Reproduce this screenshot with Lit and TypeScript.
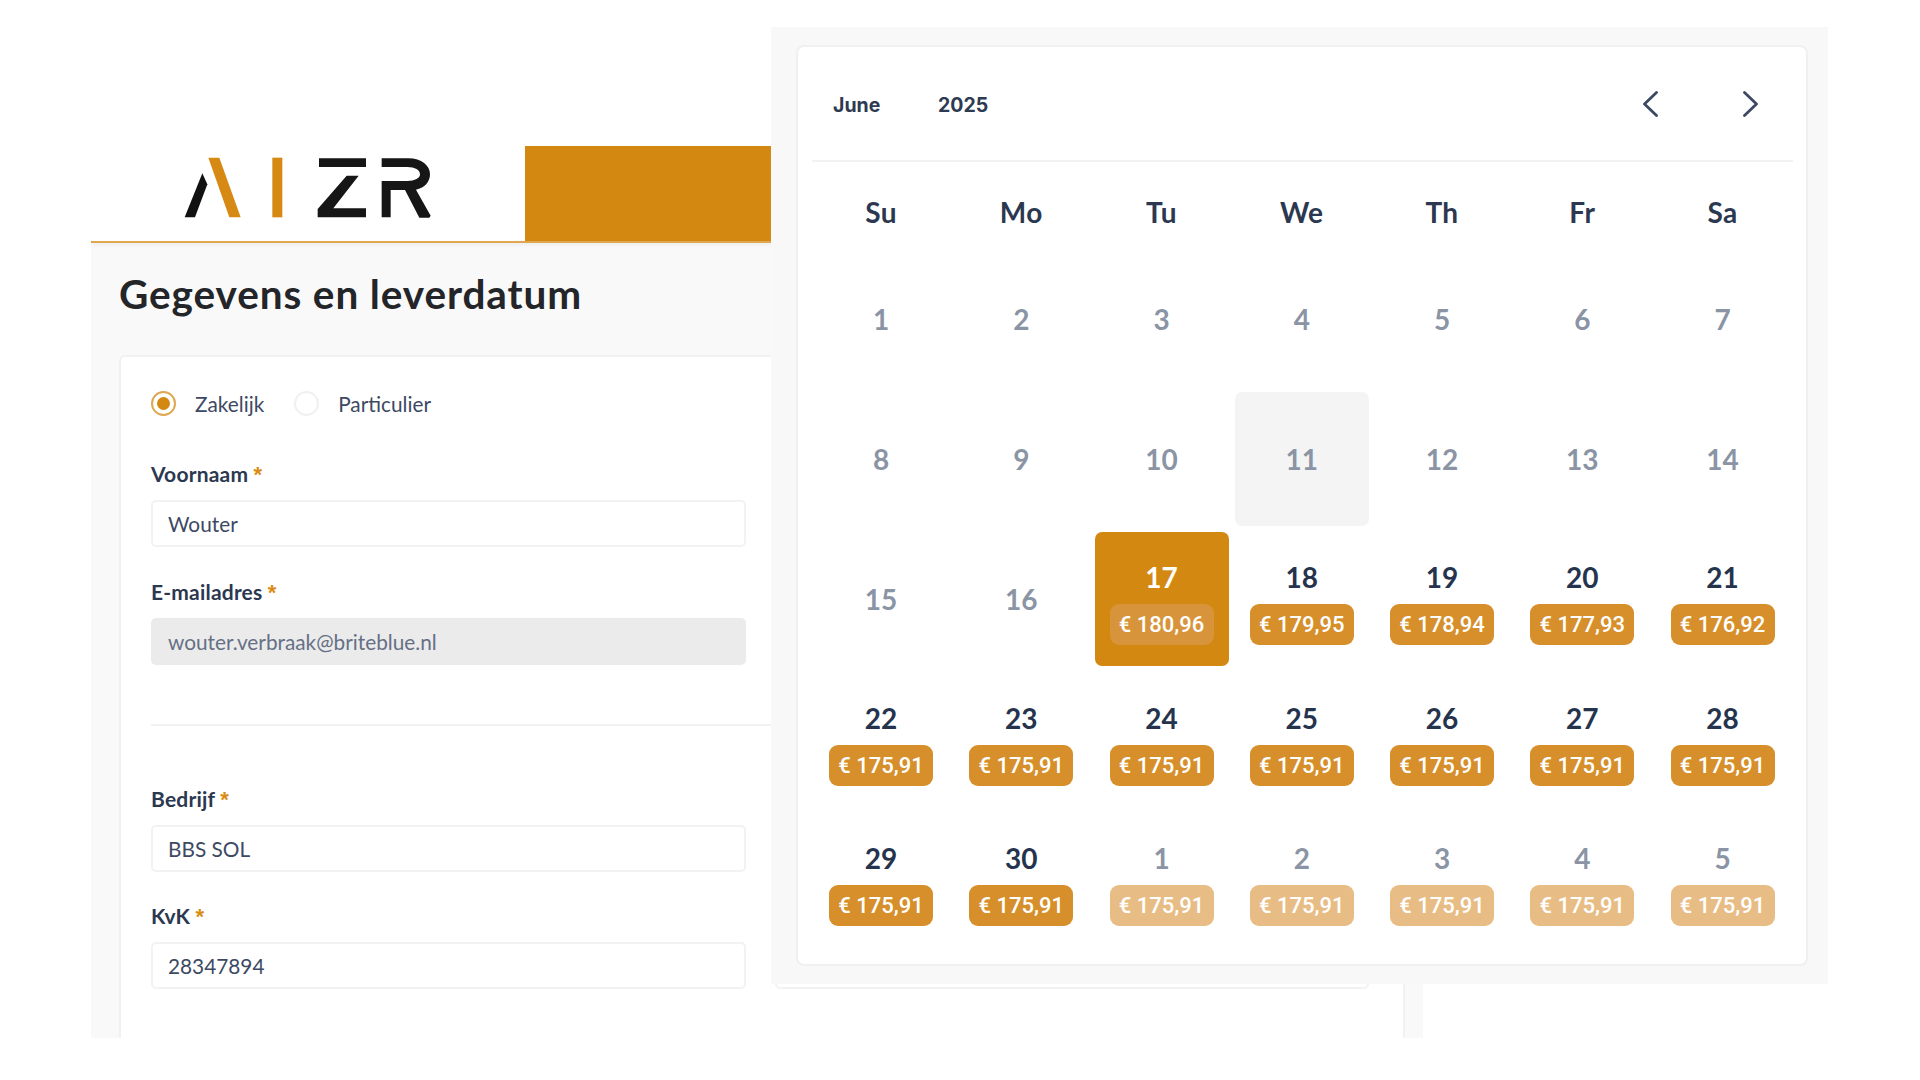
import {html, css, LitElement, svg} from 'lit';
import {customElement} from 'lit/decorators.js';
import {classMap} from 'lit/directives/class-map.js';

interface Day {
  label: string;
  price?: string;
  muted?: boolean;
  today?: boolean;
  selected?: boolean;
  faded?: boolean;
}

const WEEKDAYS = ['Su', 'Mo', 'Tu', 'We', 'Th', 'Fr', 'Sa'];

function buildDays(): Day[] {
  const days: Day[] = [];
  for (let d = 1; d <= 16; d++) {
    days.push({label: String(d), muted: true, today: d === 11});
  }
  days.push({label: '17', price: '€ 180,96', selected: true});
  days.push({label: '18', price: '€ 179,95'});
  days.push({label: '19', price: '€ 178,94'});
  days.push({label: '20', price: '€ 177,93'});
  days.push({label: '21', price: '€ 176,92'});
  for (let d = 22; d <= 30; d++) {
    days.push({label: String(d), price: '€ 175,91'});
  }
  for (let d = 1; d <= 5; d++) {
    days.push({label: String(d), price: '€ 175,91', muted: true, faded: true});
  }
  return days;
}

@customElement('app-root')
export class AppRoot extends LitElement {
  static styles = css`
    :host {
      display: block;
      position: relative;
      width: 1920px;
      height: 1080px;
      overflow: hidden;
      background: #fff;
      font-family: Lato, "Noto Sans", sans-serif;
      color: #2b3850;
    }

    /* back window */
    .window {
      position: absolute;
      left: 91px;
      top: 146px;
      width: 1332px;
      height: 892px;
      overflow: hidden;
      background: #f9f9f9;
      box-sizing: border-box;
    }

    .topbar {
      display: flex;
      justify-content: space-between;
      height: 97px;
      box-sizing: border-box;
      background: #fff;
      border-bottom: 2px solid #e0a650;
      box-shadow: 0 2px 4px rgba(0, 0, 0, 0.05);
    }

    .logo {
      width: 434px;
      height: 95px;
      flex: none;
    }

    .topbar-fill {
      width: 898px;
      background: #d38812;
    }

    h1 {
      margin: 0;
      padding: 27px 0 0 28px;
      height: 112px;
      box-sizing: border-box;
      font-size: 40.5px;
      letter-spacing: 0.9px;
      line-height: 48px;
      font-weight: 700;
      color: #232529;
    }

    .card {
      margin: 0 18px 0 28px;
      padding: 34px 33px 0 30px;
      height: 800px;
      box-sizing: border-box;
      background: #fff;
      border: 2px solid #f1f1f1;
      border-radius: 6px;
    }

    .radios {
      display: flex;
      align-items: center;
      height: 25px;
      margin-bottom: 46px;
      font-size: 20.8px;
      color: #3d4963;
    }

    .radio {
      width: 25px;
      height: 25px;
      box-sizing: border-box;
      border-radius: 50%;
      border: 2px solid #f0f0f0;
      display: flex;
      align-items: center;
      justify-content: center;
      margin-right: 19px;
    }

    .radio--on {
      border-color: #e0a650;
    }

    .radio--on::after {
      content: "";
      width: 13px;
      height: 13px;
      border-radius: 50%;
      background: #d38812;
    }

    .radio-label {
      margin-right: 30px;
    }

    .rows {
      display: grid;
      grid-template-columns: 595px 594px;
      column-gap: 29px;
      row-gap: 32px;
    }

    .field--locked {
      margin-top: 1px;
    }

    .rule {
      grid-column: 1 / -1;
      height: 2px;
      background: #f2f2f2;
      margin: 27px 0 29px;
    }

    label {
      display: block;
      height: 24px;
      line-height: 24px;
      margin-bottom: 14px;
      font-size: 21px;
      letter-spacing: 0.2px;
      font-weight: 700;
      color: #2b3850;
    }

    label span {
      font: 700 22px "Liberation Sans", Arial, sans-serif;
      color: #d98c14;
    }

    input {
      display: block;
      width: 100%;
      height: 47px;
      box-sizing: border-box;
      padding: 0 15px;
      border: 2px solid #f2f2f2;
      border-radius: 5px;
      background: #fff;
      outline: none;
      font: 400 20.8px Lato, "Noto Sans", sans-serif;
      color: #3d4963;
    }

    input.is-locked {
      background: #ebebeb;
      border-color: #ebebeb;
      color: #667085;
    }

    /* calendar popover */
    .panel {
      position: absolute;
      left: 771px;
      top: 27px;
      width: 1057px;
      height: 957px;
      box-sizing: border-box;
      padding: 18px 20px 18px 25px;
      background: #f8f8f8;
    }

    .calendar {
      height: 921px;
      box-sizing: border-box;
      padding: 0 13px 0 14px;
      background: #fff;
      border: 2px solid #f0f0f0;
      border-radius: 8px;
    }

    .cal-head {
      display: flex;
      align-items: center;
      height: 115px;
      box-sizing: border-box;
      padding: 0 35px 0 21px;
      border-bottom: 2px solid #f2f2f2;
      font: 700 19.5px Inter, "Liberation Sans", sans-serif;
      color: #2e3a52;
    }

    .cal-title {
      display: flex;
      padding-top: 2px;
    }

    .month {
      width: 105px;
    }

    .nav {
      display: flex;
      gap: 85px;
      margin-left: auto;
    }

    .nav svg {
      display: block;
      width: 15px;
      height: 26px;
    }

    .grid {
      display: grid;
      grid-template-columns: repeat(7, 134px);
      gap: 6.25px;
      margin: 30px 0 0 2px;
    }

    .weekday {
      height: 40px;
      line-height: 40px;
      margin-bottom: 13.5px;
      text-align: center;
      font-size: 28px;
      letter-spacing: 0.4px;
      font-weight: 700;
      color: #2b3850;
    }

    .day {
      height: 134px;
      box-sizing: border-box;
      display: flex;
      flex-direction: column;
      align-items: center;
      justify-content: center;
      gap: 10px;
      border-radius: 7px;
      font-size: 28px;
      font-weight: 700;
      color: #25334d;
    }

    .day--priced {
      padding-top: 7px;
    }

    .day--muted {
      color: #8a94a4;
    }

    .day--today {
      background: #f4f4f4;
    }

    .day--selected {
      background: #d38812;
      color: #fff;
    }

    .day-num {
      line-height: 34px;
    }

    .price {
      width: 104px;
      height: 41px;
      border-radius: 9px;
      background: #d68f2a;
      color: #fff;
      text-align: center;
      font: 500 22px/41px Roboto, sans-serif;
    }

    .day--selected .price {
      background: #d8943a;
    }

    .day--faded .price {
      background: #e8bd85;
    }
  `;

  private logo() {
    // traced from the brand mark, coordinates are 1/3 px over the crop
    return html`
      <svg class="logo" viewBox="0 0 1302 285">
        <g transform="translate(237 -3)">
          ${svg`
            <path fill="#111" d="M44 217 97 85 112 118 75 217Z"/>
            <path fill="#d68a13" d="M115 38H148L212 217H178Z"/>
            <rect fill="#d68a13" x="307" y="38" width="30" height="179"/>
            <path fill="#161616" d="M447 40H588V66H447ZM530 92H566L490 190H588V217H443V192Z"/>
            <path fill="#161616" d="M635 40H715C755 40 780 62 780 88 780 112 762 130 738 134L782 212 778 218H748L705 135H662V217H635V108H712C735 108 750 100 750 88 750 75 735 66 712 66H635Z"/>
          `}
        </g>
      </svg>
    `;
  }

  private field(name: string, value: string, locked = false) {
    return html`
      <div class=${classMap({'field--locked': locked})}>
        <label>${name} <span>*</span></label>
        <input class=${classMap({'is-locked': locked})} value=${value} readonly />
      </div>
    `;
  }

  private renderDay(day: Day) {
    const classes = {
      day: true,
      'day--priced': !!day.price,
      'day--muted': !!day.muted,
      'day--today': !!day.today,
      'day--selected': !!day.selected,
      'day--faded': !!day.faded,
    };
    return html`
      <div class=${classMap(classes)}>
        <div class="day-num">${day.label}</div>
        ${day.price ? html`<div class="price">${day.price}</div>` : ''}
      </div>
    `;
  }

  render() {
    return html`
      <div class="window">
        <div class="topbar">
          ${this.logo()}
          <div class="topbar-fill"></div>
        </div>
        <h1>Gegevens en leverdatum</h1>
        <div class="card">
          <div class="radios">
            <div class="radio radio--on"></div>
            <div class="radio-label">Zakelijk</div>
            <div class="radio"></div>
            <div class="radio-label">Particulier</div>
          </div>
          <div class="rows">
            ${this.field('Voornaam', 'Wouter')}
            <div></div>
            ${this.field('E-mailadres', 'wouter.verbraak@briteblue.nl', true)}
            <div></div>
            <div class="rule"></div>
            ${this.field('Bedrijf', 'BBS SOL')}
            <div></div>
            ${this.field('KvK', '28347894')}
            <div><label></label><input readonly /></div>
          </div>
        </div>
      </div>

      <div class="panel">
        <div class="calendar">
          <div class="cal-head">
            <div class="cal-title">
              <div class="month">June</div>
              <div>2025</div>
            </div>
            <div class="nav">
              <svg viewBox="0 0 15 26" fill="none" stroke="#3d4963" stroke-width="2.8" stroke-linecap="round" stroke-linejoin="round">
                <path d="M13.5 1.5 1.5 13 13.5 24.5" />
              </svg>
              <svg viewBox="0 0 15 26" fill="none" stroke="#3d4963" stroke-width="2.8" stroke-linecap="round" stroke-linejoin="round">
                <path d="M1.5 1.5 13.5 13 1.5 24.5" />
              </svg>
            </div>
          </div>
          <div class="grid">
            ${WEEKDAYS.map((w) => html`<div class="weekday">${w}</div>`)}
            ${buildDays().map((d) => this.renderDay(d))}
          </div>
        </div>
      </div>
    `;
  }
}

declare global {
  interface HTMLElementTagNameMap {
    'app-root': AppRoot;
  }
}
